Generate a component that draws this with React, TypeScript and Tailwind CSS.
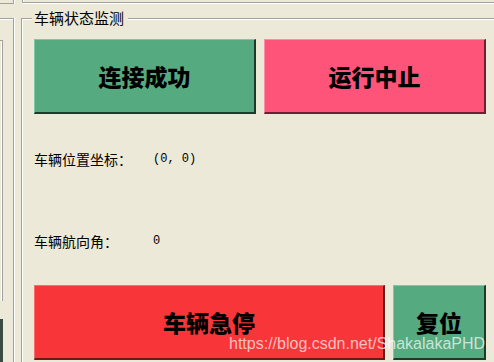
const groove = "border-[#a0a0a0]";

function ColorButton({
  label,
  className,
}: {
  label: string;
  className: string;
}) {
  return (
    <button
      className={`flex items-center justify-center border-t border-l border-r-2 border-b-2 text-[23px] leading-none font-black text-black ${className}`}
    >
      {label}
    </button>
  );
}

export default function App() {
  return (
    <div className="w-[494px] h-[362px] bg-[#ECE9D8] overflow-hidden relative flex flex-col font-['Noto_Sans_CJK_SC',sans-serif] text-black">
      {/* top strip: ends of the panels above */}
      <div className="flex h-[4px] shrink-0">
        <div className={`w-[14px] border-r border-b ${groove} shadow-[1px_0_0_#fff]`} />
        <div
          className={`ml-[8px] flex-1 h-[3px] border-l border-b ${groove} shadow-[inset_1px_0_0_#fff,0_1px_0_#fff]`}
        />
      </div>

      <div className="flex flex-1 min-h-0">
        {/* left panel (cut off) */}
        <div
          className={`mt-[14px] w-[14px] border-t border-r ${groove} shadow-[1px_0_0_#fff,inset_0_1px_0_#fff] flex flex-col`}
        >
          <div
            className={`mt-[21px] h-[261px] w-[3px] border-t border-r ${groove} shadow-[inset_-1px_0_0_#fff]`}
          />
          <div className="mt-[18px] w-[3px] flex-1 bg-[#3b4a42]" />
        </div>

        {/* group box 车辆状态监测 */}
        <div
          className={`relative ml-[7px] mt-[14px] flex-1 border-t border-l ${groove} shadow-[inset_1px_1px_0_#fff] pt-[20px] pl-[12px]`}
        >
          <span className="absolute left-[10px] -top-[9px] bg-[#ECE9D8] pl-[2px] pr-[4px] text-[15px] leading-[16px]">
            车辆状态监测
          </span>

          <div className="flex gap-[8px]">
            <ColorButton
              label="连接成功"
              className="w-[222px] h-[75px] bg-[#55AA80] border-t-[#7cc9a2] border-l-[#7cc9a2] border-r-[#1d3a2b] border-b-[#1d3a2b]"
            />
            <ColorButton
              label="运行中止"
              className="w-[222px] h-[75px] bg-[#FF5479] border-t-[#ff8aa4] border-l-[#ff8aa4] border-r-[#6a2233] border-b-[#6a2233]"
            />
          </div>

          <div className="mt-[37px] flex text-[14px] leading-[16px]">
            <span className="w-[119px]">车辆位置坐标：</span>
            <span className="font-['Liberation_Mono',monospace] text-[12px] whitespace-pre">
              (0, 0)
            </span>
          </div>

          <div className="mt-[66px] flex text-[14px] leading-[16px]">
            <span className="w-[119px]">车辆航向角：</span>
            <span className="font-['Liberation_Mono',monospace] text-[12px]">0</span>
          </div>

          <div className="mt-[36px] flex gap-[8px]">
            <ColorButton
              label="车辆急停"
              className="w-[351px] h-[75px] bg-[#F83539] border-t-[#ff6a6d] border-l-[#ff6a6d] border-r-[#6b1a1c] border-b-[#6b1a1c]"
            />
            <ColorButton
              label="复位"
              className="w-[93px] h-[75px] bg-[#55AA80] border-t-[#7cc9a2] border-l-[#7cc9a2] border-r-[#1d3a2b] border-b-[#1d3a2b]"
            />
          </div>
        </div>
      </div>

      {/* csdn watermark */}
      <div className="absolute left-[229px] top-[332px] font-['Liberation_Sans',sans-serif] text-[16px] text-white/70 pointer-events-none">
        https://blog.csdn.net/ShakalakaPHD
      </div>
    </div>
  );
}
